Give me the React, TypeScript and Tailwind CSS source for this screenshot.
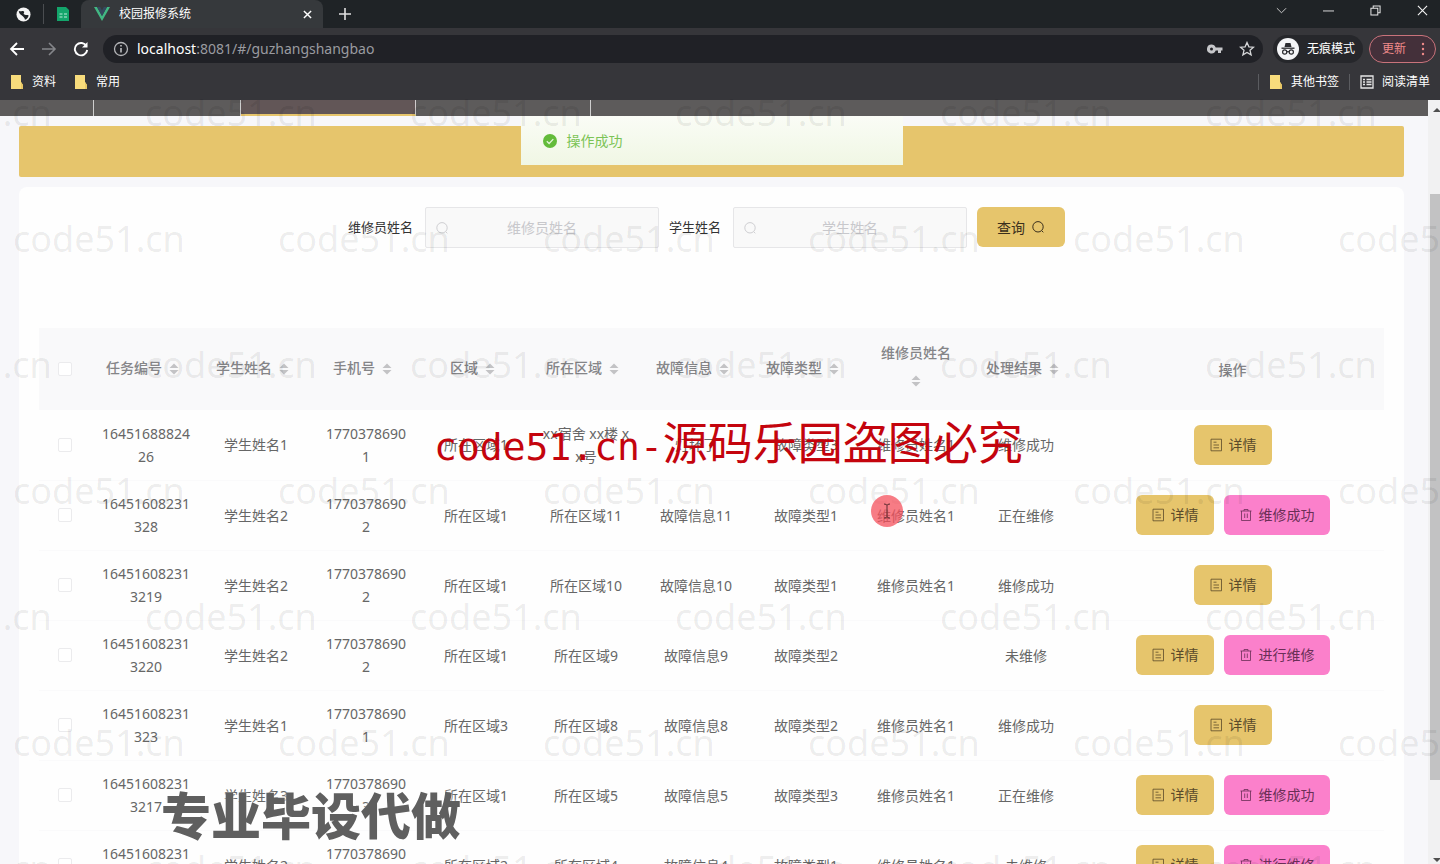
import { useState } from 'react';
import type { ReactNode } from 'react';

interface Task {
  id: string;
  student: string;
  phone: string;
  area: string;
  place: string;
  fault: string;
  type: string;
  worker: string;
  result: string;
  action?: string;
}

const columns = ['任务编号', '学生姓名', '手机号', '区域', '所在区域', '故障信息', '故障类型', '维修员姓名', '处理结果'];

const tasks: Task[] = [
  { id: '1645168882426', student: '学生姓名1', phone: '17703786901', area: '所在区域1', place: 'xx宿舍 xx楼 xx号', fault: '灯坏了', type: '故障类型3', worker: '维修员姓名1', result: '维修成功' },
  { id: '16451608231328', student: '学生姓名2', phone: '17703786902', area: '所在区域1', place: '所在区域11', fault: '故障信息11', type: '故障类型1', worker: '维修员姓名1', result: '正在维修', action: '维修成功' },
  { id: '164516082313219', student: '学生姓名2', phone: '17703786902', area: '所在区域1', place: '所在区域10', fault: '故障信息10', type: '故障类型1', worker: '维修员姓名1', result: '维修成功' },
  { id: '164516082313220', student: '学生姓名2', phone: '17703786902', area: '所在区域1', place: '所在区域9', fault: '故障信息9', type: '故障类型2', worker: '', result: '未维修', action: '进行维修' },
  { id: '16451608231323', student: '学生姓名1', phone: '17703786901', area: '所在区域3', place: '所在区域8', fault: '故障信息8', type: '故障类型2', worker: '维修员姓名1', result: '维修成功' },
  { id: '164516082313217', student: '学生姓名3', phone: '17703786903', area: '所在区域1', place: '所在区域5', fault: '故障信息5', type: '故障类型3', worker: '维修员姓名1', result: '正在维修', action: '维修成功' },
  { id: '164516082313216', student: '学生姓名2', phone: '17703786902', area: '所在区域2', place: '所在区域4', fault: '故障信息4', type: '故障类型1', worker: '维修员姓名1', result: '未维修', action: '进行维修' },
];

function FolderIcon() {
  return (
    <svg viewBox="0 0 14 16" className="h-4 w-[14px] shrink-0">
      <path d="M1 1h10v7l2 3v4H1z" fill="#f8dc7c" />
      <path d="M11 8l2 3v4h-2z" fill="#e8c765" />
    </svg>
  );
}

function SearchIcon({ className }: { className: string }) {
  return (
    <svg viewBox="0 0 14 14" fill="none" stroke="currentColor" className={className}>
      <circle cx="7" cy="6.8" r="5.2" />
      <path d="M10.8 10.8l1.500 1.500" />
    </svg>
  );
}

function DocIcon() {
  return (
    <svg viewBox="0 0 14 14" fill="none" stroke="currentColor" strokeWidth="0.8" className="size-[14px]">
      <path d="M2 1.200h10.500v11.600H2zM4.500 4.200h3M4.500 7h5.500M4.500 9.800h5.500" />
    </svg>
  );
}

function TrashIcon() {
  return (
    <svg viewBox="0 0 14 14" fill="none" stroke="currentColor" strokeWidth="0.8" className="size-[14px]">
      <path d="M1.500 3h11M5 3V1.500h4V3M2.500 3v9.500h9V3M5.700 5.500v4.500M8.300 5.500v4.500" />
    </svg>
  );
}

function SortCaret() {
  return (
    <span className="inline-flex h-[34px] w-6 items-center justify-center align-middle">
      <svg viewBox="0 0 10 14" fill="#c3c3c5" className="h-[14px] w-[10px]">
        <path d="M5 1.500l4.500 4.500h-9zM5 12.500l4.500-4.500h-9z" />
      </svg>
    </span>
  );
}

function BrowserBar() {
  return (
    <header className="shrink-0 bg-[#36363a] text-[13px] text-white">
      <div className="flex h-7 items-center bg-[#1f2326]">
        <div className="flex h-7 w-[81px] items-center gap-3 pl-4">
          <svg viewBox="0 0 16 16" className="size-[15px]">
            <circle cx="8" cy="8" r="7.5" fill="#f4f4f4" />
            <path d="M3 4c2 1.500 3-.5 5 .5s-1 2.500 1 3.500 3 0 4.500 1c-.5 2-2 4-4 4.500 0-2-1-2-2-3.500S3 8 3 4z" fill="#1f2326" />
          </svg>
          <span className="h-5 w-px bg-[#4a4d50]" />
          <svg viewBox="0 0 14 16" className="h-4 w-[14px]">
            <path d="M1 1h9l3 3v11H1z" fill="#13a56b" />
            <path d="M3.500 8h3M8 8h3M3.500 11h3M8 11h3" stroke="#bfeedb" strokeWidth="1.200" />
          </svg>
        </div>
        <div className="flex h-7 w-[242px] items-center rounded-t-lg bg-[#36393c] pr-2 pl-3">
          <svg viewBox="0 0 18 16" className="h-4 w-[18px]">
            <path d="M1 1h3l5 9 5-9h3L9 15z" fill="#42b883" />
            <path d="M4 1h3.200L9 4.500 10.800 1H14L9 10z" fill="#35495e" />
          </svg>
          <span className="ml-2 flex-1 text-[12px]">校园报修系统</span>
          <button aria-label="关闭标签页" className="flex size-4 items-center justify-center">
            <svg viewBox="0 0 10 10" stroke="#fff" strokeWidth="1.600" className="size-[9px]">
              <path d="M1 1l8 8M9 1L1 9" />
            </svg>
          </button>
        </div>
        <button aria-label="新标签页" className="ml-4">
          <svg viewBox="0 0 12 12" stroke="#e0e0e0" strokeWidth="1.600" className="size-3">
            <path d="M6 0v12M0 6h12" />
          </svg>
        </button>
        <div className="ml-auto flex items-center gap-9 pr-3 pb-2">
          <svg viewBox="0 0 12 12" fill="none" stroke="#d8d8d8" className="size-[11px]">
            <path d="M1 3.500l5 5 5-5" />
          </svg>
          <svg viewBox="0 0 12 12" stroke="#e8e8e8" className="size-[11px]">
            <path d="M0 6.500h12" />
          </svg>
          <svg viewBox="0 0 12 12" fill="none" stroke="#e8e8e8" strokeWidth="1.100" className="size-[11px]">
            <path d="M1 3.500h7.500V11H1zM3.500 3.500V1H11v7.500H8.500" />
          </svg>
          <svg viewBox="0 0 12 12" fill="none" stroke="#f4f4f4" strokeWidth="1.200" className="size-[11px]">
            <path d="M1 1l10 10M11 1L1 11" />
          </svg>
        </div>
      </div>

      <div className="flex h-[42px] items-center pr-1 pl-[9px]">
        <div className="flex items-center gap-4 pr-[14px]">
          <svg viewBox="0 0 16 16" fill="none" stroke="#fff" strokeWidth="1.800" className="size-4">
            <path d="M15 8H2M8 2L2 8l6 6" />
          </svg>
          <svg viewBox="0 0 16 16" fill="none" stroke="#85868a" strokeWidth="1.600" className="size-4">
            <path d="M1 8h13M8 2l6 6-6 6" />
          </svg>
          <svg viewBox="0 0 16 16" fill="none" stroke="#fff" strokeWidth="1.900" className="size-4">
            <path d="M13.500 5.200A6.200 6.200 0 1 0 14.200 9" />
            <path d="M14.500 1v5.500H9z" fill="#fff" stroke="none" />
          </svg>
        </div>
        <div className="flex h-7 flex-1 items-center rounded-full bg-[#202126] pr-2 pl-[10px]">
          <svg viewBox="0 0 16 16" fill="none" stroke="#b4b5b8" strokeWidth="1.300" className="size-4">
            <circle cx="8" cy="8" r="6.500" />
            <path d="M8 7v4.500M8 4v1.600" strokeWidth="1.700" />
          </svg>
          <span className="ml-2 flex-1 text-[14px] leading-5 text-[#9a9ba0]">
            <span className="text-white">localhost</span>:8081/#/guzhangshangbao
          </span>
          <svg viewBox="0 0 16 10" className="mr-4 h-[10px] w-4">
            <path d="M4.500.5a4.500 4.500 0 1 0 4.200 6H11V9h3V6.500h1.500v-3H8.700A4.500 4.500 0 0 0 4.500.5zm0 3a1.500 1.500 0 1 1 0 3 1.500 1.500 0 0 1 0-3z" fill="#c6c7ca" fillRule="evenodd" />
          </svg>
          <svg viewBox="0 0 16 16" fill="none" stroke="#d6d7d9" strokeWidth="1.300" className="size-4">
            <path d="M8 1.500l1.900 4.300 4.600.4-3.500 3.100 1.100 4.600L8 11.500l-4.100 2.400L5 9.300 1.500 6.200l4.600-.4z" />
          </svg>
        </div>
        <div className="mr-[6px] ml-[10px] flex h-7 items-center gap-2 rounded-full bg-[#26272b] pr-2 pl-1">
          <svg viewBox="0 0 22 22" className="size-[22px]">
            <circle cx="11" cy="11" r="11" fill="#f4f5f7" />
            <path d="M7.500 9l1-4h5l1 4z" fill="#2a2b2f" />
            <path d="M4.500 10.200h13" stroke="#2a2b2f" strokeWidth="1.300" />
            <g fill="none" stroke="#2a2b2f" strokeWidth="1.200">
              <circle cx="7.700" cy="14" r="2.100" />
              <circle cx="14.300" cy="14" r="2.100" />
              <path d="M9.800 13.700h2.400" />
            </g>
          </svg>
          <span className="text-[12px]">无痕模式</span>
        </div>
        <button className="flex h-7 w-[67px] items-center justify-between rounded-full border border-[#c9737b] bg-[#44303a] pr-[10px] pl-3 text-[12px] text-[#f08a8a]">
          更新
          <svg viewBox="0 0 4 14" fill="#f08a8a" className="h-[14px] w-1">
            <circle cx="2" cy="2" r="1.200" />
            <circle cx="2" cy="7" r="1.200" />
            <circle cx="2" cy="12" r="1.200" />
          </svg>
        </button>
      </div>

      <div className="flex h-[30px] items-start gap-2 px-[10px] pt-[2px] text-[12px] leading-5">
        <a href="#" className="flex items-center gap-2">
          <FolderIcon />
          资料
        </a>
        <a href="#" className="ml-[10px] flex items-center gap-2">
          <FolderIcon />
          常用
        </a>
        <div className="ml-auto flex items-center gap-[10px]">
          <span className="h-4 w-px bg-[#5b5c60]" />
          <a href="#" className="flex items-center gap-2">
            <FolderIcon />
            其他书签
          </a>
          <span className="h-4 w-px bg-[#5b5c60]" />
          <a href="#" className="flex items-center gap-2">
            <svg viewBox="0 0 14 14" fill="none" stroke="#e6e6e6" strokeWidth="1.300" className="size-[14px]">
              <path d="M1 1h12v12H1zM3 4.500h2M6.500 4.500h5M3 7h2M6.500 7h5M3 9.500h2M6.500 9.500h5" />
            </svg>
            阅读清单
          </a>
        </div>
      </div>
    </header>
  );
}

function SearchField({ label, value, onChange }: { label: string; value: string; onChange: (v: string) => void }) {
  return (
    <div className="mr-[10px] flex items-center">
      <label htmlFor={label} className="pr-3 text-[13px] text-[#333]">
        {label}
      </label>
      <div className="relative">
        <SearchIcon className="absolute top-[14px] left-[10px] size-[14px] text-[#cfcfd2]" />
        <input
          id={label}
          type="text"
          placeholder={label}
          value={value}
          onChange={(e) => onChange(e.target.value)}
          className="h-[41px] w-[234px] rounded-xs border border-[#e6e6e8] bg-[#f9f9f9] px-[30px] text-center text-[14px] placeholder:text-[#c8c8cc]"
        />
      </div>
    </div>
  );
}

function RowButton({ className, children }: { className: string; children: ReactNode }) {
  return (
    <button className={`flex h-10 items-center gap-[6px] rounded-md px-[15px] text-[14px] leading-5 ${className}`}>
      {children}
    </button>
  );
}

function Checkbox({ label }: { label: string }) {
  return (
    <input
      type="checkbox"
      aria-label={label}
      className="mx-auto block size-[14px] appearance-none rounded-xs border border-[#ebebed] bg-white checked:bg-[#e6c56c]"
    />
  );
}

function TaskTable() {
  return (
    <table className="w-full table-fixed border-collapse text-center text-[14px] leading-[23px] text-[#666]">
      <thead className="bg-[#f9f9fa] text-[#858588]">
        <tr className="h-[82px]">
          <th className="w-[52px]">
            <Checkbox label="全选" />
          </th>
          {columns.map((name) => (
            <th key={name} className="w-[110px] px-[10px] font-medium">
              {name}
              <SortCaret />
            </th>
          ))}
          <th className="font-medium">操作</th>
        </tr>
      </thead>
      <tbody>
        {tasks.map((task) => (
          <tr key={task.id} className="h-[70px] border-b border-[#fafafb]">
            <td>
              <Checkbox label={task.id} />
            </td>
            <td className="px-[10px] break-all">{task.id}</td>
            <td>{task.student}</td>
            <td className="px-[12px] break-all">{task.phone}</td>
            <td>{task.area}</td>
            <td className="px-[10px] break-all">{task.place}</td>
            <td>{task.fault}</td>
            <td>{task.type}</td>
            <td>{task.worker}</td>
            <td>{task.result}</td>
            <td>
              <div className="flex justify-center gap-[10px]">
                <RowButton className="bg-[#e6c56c] text-[#5a4a2a]">
                  <DocIcon />
                  详情
                </RowButton>
                {task.action && (
                  <RowButton className="bg-[#fb80cb] text-[#6a2f56]">
                    <TrashIcon />
                    {task.action}
                  </RowButton>
                )}
              </div>
            </td>
          </tr>
        ))}
      </tbody>
    </table>
  );
}

function Watermarks() {
  return (
    <div className="pointer-events-none absolute inset-x-0 top-[50px] bottom-0 overflow-hidden font-['Noto_Sans'] text-[36px] text-black/[0.08] select-none">
      {[0, 1, 2, 3, 4, 5, 6].map((row) => (
        <div key={row} className={`flex h-[126px] items-center gap-[95px] ${row % 2 ? 'pl-[13px]' : '-ml-[120px]'}`}>
          {[0, 1, 2, 3, 4, 5].map((col) => (
            <span key={col} className="w-[170px] shrink-0">
              code51.cn
            </span>
          ))}
        </div>
      ))}
    </div>
  );
}

export default function App() {
  const [worker, setWorker] = useState('');
  const [student, setStudent] = useState('');

  return (
    <div className="relative flex h-screen flex-col overflow-hidden bg-[#f7f7fa] font-['Noto_Sans','Noto_Sans_CJK_SC',sans-serif]">
      <BrowserBar />

      <div className="flex min-h-0 flex-1">
        <div className="relative flex-1 overflow-hidden">
          {/* bottom edge of the site menu */}
          <nav className="flex h-4 bg-[#5d5b5b]">
            <span className="w-[94px] border-r border-white/70" />
            <span className="w-[147px] border-r border-white/70" />
            <span className="w-[175px] border-r border-b-2 border-r-white/70 border-b-[#e6c56c] bg-[#625657]" />
            <span className="w-[175px] border-r border-white/70" />
          </nav>

          <main className="relative pt-[10px] pr-6 pl-[19px]">
            <div className="h-[51px] rounded-xs bg-[#e6c56c]" />
            <section className="mt-[10px] rounded-lg bg-[#fefefe] p-5">
              <form className="flex justify-center" onSubmit={(e) => e.preventDefault()}>
                <SearchField label="维修员姓名" value={worker} onChange={setWorker} />
                <SearchField label="学生姓名" value={student} onChange={setStudent} />
                <button type="submit" className="mr-[10px] flex h-10 items-center gap-[6px] rounded-md bg-[#e6c56c] px-5 text-[14px] text-[#3a2f1c]">
                  查询
                  <SearchIcon className="size-[14px]" />
                </button>
              </form>
              <div className="mt-20">
                <TaskTable />
              </div>
            </section>

            <div role="alert" className="absolute top-0 right-6 left-[19px] mx-auto flex h-[49px] w-[382px] items-center gap-[10px] bg-linear-to-b from-[#fafcf6] to-[#f0f7e4] pl-[22px] text-[14px] text-[#7cc456]">
              <svg viewBox="0 0 14 14" className="size-[14px]">
                <circle cx="7" cy="7" r="7" fill="#63bb3a" />
                <path d="M3.800 7.200l2.300 2.300 4.200-4.400" fill="none" stroke="#e4f5da" strokeWidth="1.300" />
              </svg>
              操作成功
            </div>
          </main>
        </div>

        <div className="flex w-3 flex-col items-end bg-[#f1f1f2]">
          <svg viewBox="0 0 12 16" className="h-4 w-3">
            <path d="M9 8l4 4H5z" fill="#4f4f4f" />
          </svg>
          <div className="mt-[78px] h-[586px] w-[10px] bg-[#c2c2c3]" />
          <svg viewBox="0 0 12 16" className="mt-auto h-4 w-3">
            <path d="M9 14l4-4H5z" fill="#4f4f4f" />
          </svg>
        </div>
      </div>

      <Watermarks />

      <div className="pointer-events-none absolute top-[495px] left-[871px] flex size-8 items-center justify-center rounded-full bg-[#f4505c]/75">
        <svg viewBox="0 0 10 16" fill="none" stroke="#5a2a2e" className="h-4 w-[10px]">
          <path d="M2 1q3 0 3 1.500v11Q5 15 2 15M8 1Q5 1 5 2.500M5 13.500Q5 15 8 15" />
        </svg>
      </div>
      <p className="pointer-events-none absolute top-[408px] left-[434px] font-['DejaVu_Sans_Mono','Noto_Sans_CJK_SC',sans-serif] text-[38px] leading-[66px] whitespace-nowrap text-[#c4040d]">
        code51.cn-<span className="font-['Noto_Sans_CJK_SC',sans-serif] text-[45px]">源码乐园盗图必究</span>
      </p>
      <p className="pointer-events-none absolute top-[778px] left-[161px] font-['Noto_Sans_CJK_SC',sans-serif] text-[50px] leading-[70px] font-black whitespace-nowrap text-[#5f5f5f] [text-shadow:0_0_3px_#fff]">
        专业毕设代做
      </p>
    </div>
  );
}
